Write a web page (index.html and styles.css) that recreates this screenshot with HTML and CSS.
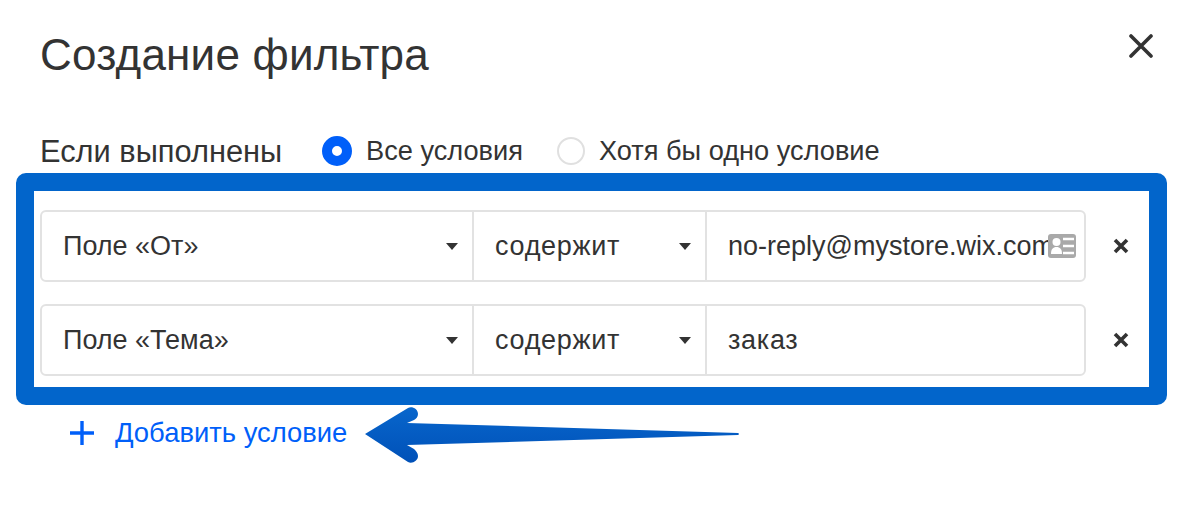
FILE: index.html
```html
<!DOCTYPE html>
<html lang="ru">
<head>
    <meta charset="UTF-8">
    <title>Создание фильтра</title>
    <link rel="stylesheet" href="styles.css">
</head>
<body>
    <div class="dialog">
        <div class="header">
            <h1>Создание фильтра</h1>
            <svg class="close" width="24" height="24" viewBox="0 0 24 24"><path d="M2 2L22 22M22 2L2 22" stroke="#333" stroke-width="3.6" stroke-linecap="round"/></svg>
        </div>

        <div class="match">
            <span class="matchLabel">Если выполнены</span>
            <span class="radio radioOn"></span>
            <span class="radioText">Все условия</span>
            <span class="radio"></span>
            <span class="radioText">Хотя бы одно условие</span>
        </div>

        <div class="highlight">
            <div class="rule">
                <div class="fields">
                    <div class="select selectField">Поле «От»<span class="caret"></span></div>
                    <div class="select selectOp"><span class="wide">содержит</span><span class="caret"></span></div>
                    <div class="value">no-reply@mystore.wix.com
                        <svg class="contact" width="28" height="24" viewBox="0 0 28 24"><rect width="28" height="24" rx="3" fill="#a9a9a9"/><circle cx="8.5" cy="8" r="4" fill="#fff"/><path d="M3 20c0-5 2-7 5.500-7s5.500 2 5.500 7z" fill="#fff"/><path d="M15 5h11M15 12h11M15 19h11" stroke="#fff" stroke-width="2.400"/></svg>
                    </div>
                </div>
                <svg class="remove" width="16" height="16" viewBox="0 0 16 16"><path d="M2 2L14 14M14 2L2 14" stroke="#333" stroke-width="3.600"/></svg>
            </div>
            <div class="rule">
                <div class="fields">
                    <div class="select selectField">Поле «Тема»<span class="caret"></span></div>
                    <div class="select selectOp"><span class="wide">содержит</span><span class="caret"></span></div>
                    <div class="value"><span class="wide">заказ</span></div>
                </div>
                <svg class="remove" width="16" height="16" viewBox="0 0 16 16"><path d="M2 2L14 14M14 2L2 14" stroke="#333" stroke-width="3.600"/></svg>
            </div>
        </div>

        <div class="addRow">
            <svg class="plus" width="26" height="26" viewBox="0 0 26 26"><path d="M13 1V25M1 13H25" stroke="#005ff9" stroke-width="3.400"/></svg>
            <span class="addText">Добавить условие</span>
        </div>
    </div>

    <svg class="arrow" width="376" height="58" viewBox="0 0 376 58">
        <defs>
            <linearGradient id="arrowFill" x1="0" y1="0" x2="0" y2="1">
                <stop offset="0" stop-color="#0866cc"/>
                <stop offset="1" stop-color="#0051b8"/>
            </linearGradient>
        </defs>
        <path d="M1 28L44 2C48 0 54 3 54 8C54 11 52 13 50 14L43 17L374 27Q376 28 374 29L43 39L50 43C52 45 54 47 54 50C54 55 48 58 44 56Z" fill="url(#arrowFill)"/>
    </svg>
</body>
</html>
```

FILE: styles.css
```css
html, body {
    height: 100%;
}

body {
    margin: 0;
    font-family: "Liberation Sans", Arial, sans-serif;
    color: #333;
    background: #fff;
    position: relative;
}

.dialog {
    padding: 0 21px 0 16px;
}

.header {
    display: flex;
    justify-content: space-between;
    align-items: center;
    padding: 30px 14px 0 24px;
    height: 50px;
}

h1 {
    margin: 0;
    font-size: 44px;
    font-weight: normal;
    line-height: 50px;
    letter-spacing: 0.2px;
}

.close {
    margin-top: -18px;
}

.match {
    display: flex;
    align-items: center;
    margin-top: 48px;
    padding-left: 24px;
    height: 45px;
}

.matchLabel {
    font-size: 30.8px;
    width: 282px;
    padding-top: 2px;
}

.radio {
    width: 24px;
    height: 24px;
    border: 2px solid #e0e0e0;
    border-radius: 50%;
    margin-right: 14px;
}

.radioOn {
    width: 10px;
    height: 10px;
    border: 10px solid #005ff9;
    background: #fff;
}

.radioText {
    font-size: 27.2px;
    margin-right: 34px;
}

.highlight {
    border: 18px solid #0265cb;
    border-radius: 10px;
    padding: 19px 0 11px 6px;
    margin-bottom: 5px;
    width: 1109px;
}

.rule {
    display: flex;
    align-items: center;
    margin-bottom: 22px;
}

.rule:last-child {
    margin-bottom: 0;
}

.fields {
    display: flex;
    width: 1042px;
    height: 68px;
    border: 2px solid #e2e2e2;
    border-radius: 6px;
    font-size: 27px;
    flex-shrink: 0;
}

.select {
    display: flex;
    align-items: center;
    justify-content: space-between;
    box-sizing: border-box;
    padding: 0 14px 0 21px;
    border-right: 2px solid #e2e2e2;
}

.selectField {
    width: 432px;
}

.selectOp {
    width: 233px;
}

.wide {
    letter-spacing: 0.7px;
}

.caret {
    border: 6px solid transparent;
    border-top: 7px solid #333;
    border-bottom: 0;
}

.value {
    flex: 1;
    display: flex;
    align-items: center;
    padding-left: 21px;
    position: relative;
    white-space: nowrap;
}

.contact {
    position: absolute;
    right: 8px;
    top: 22px;
}

.remove {
    margin-left: 27px;
}

.addRow {
    display: flex;
    align-items: center;
    padding-left: 53px;
    height: 46px;
}

.addText {
    color: #005ff9;
    font-size: 27.4px;
    margin-left: 20px;
}

.arrow {
    position: absolute;
    left: 364px;
    top: 406px;
}
```
